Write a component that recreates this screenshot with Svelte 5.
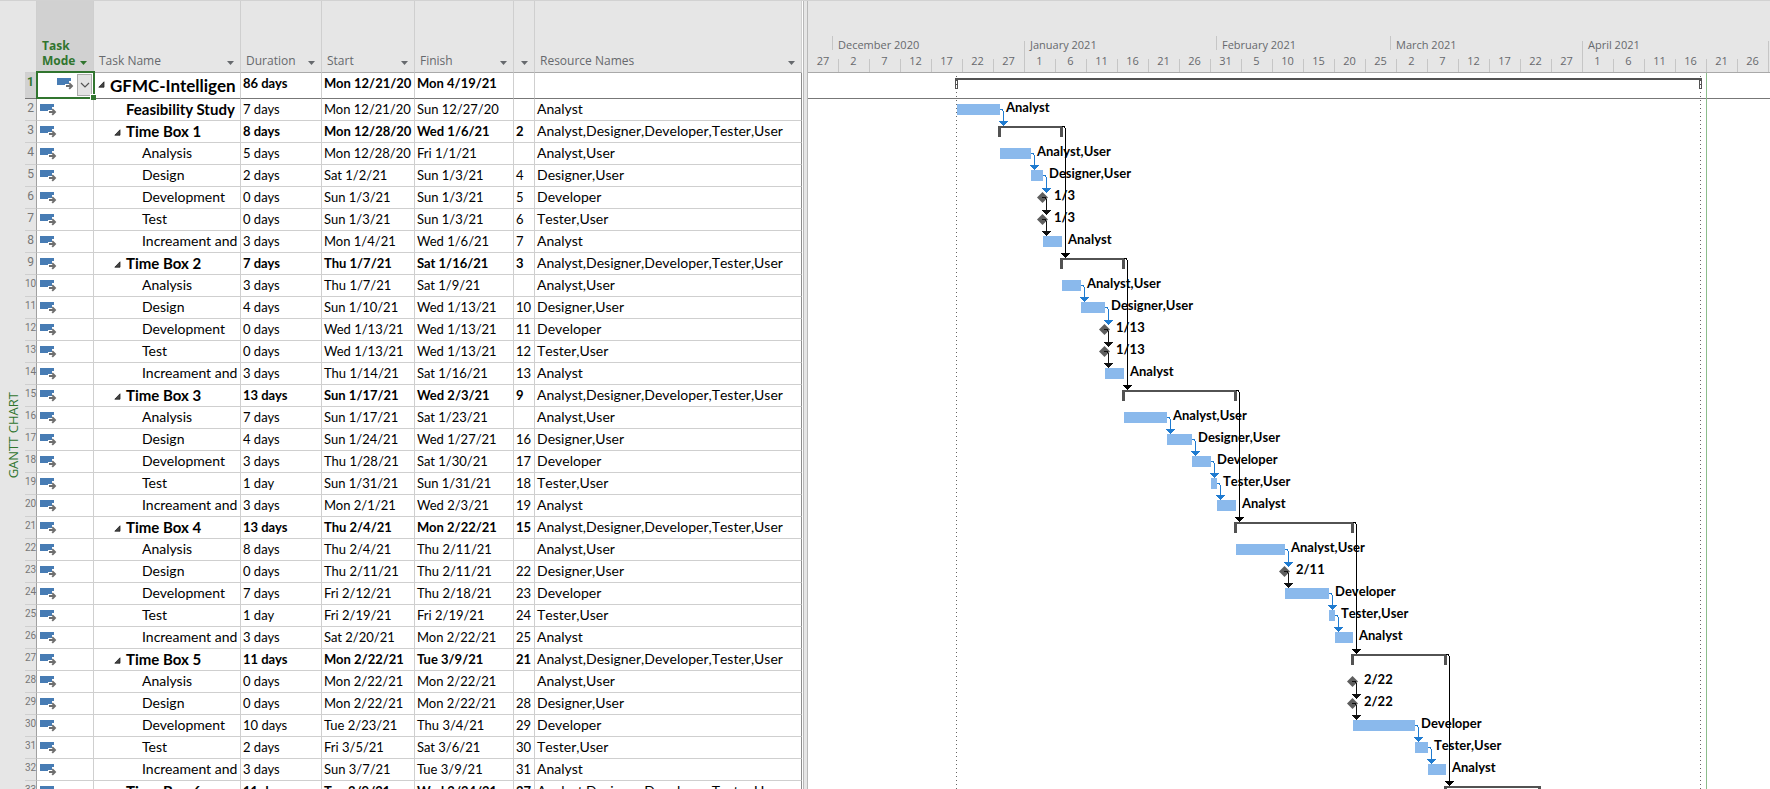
<script>
  const ALL = 'Analyst,Designer,Developer,Tester,User';
  // level, name, duration, start, finish, predecessor, resources
  const tasks = [
    [0, 'GFMC-Intelligen', '86 days', 'Mon 12/21/20', 'Mon 4/19/21', '', ''],
    [1, 'Feasibility Study', '7 days', 'Mon 12/21/20', 'Sun 12/27/20', '', 'Analyst'],
    [1, 'Time Box 1', '8 days', 'Mon 12/28/20', 'Wed 1/6/21', '2', ALL],
    [2, 'Analysis', '5 days', 'Mon 12/28/20', 'Fri 1/1/21', '', 'Analyst,User'],
    [2, 'Design', '2 days', 'Sat 1/2/21', 'Sun 1/3/21', '4', 'Designer,User'],
    [2, 'Development', '0 days', 'Sun 1/3/21', 'Sun 1/3/21', '5', 'Developer'],
    [2, 'Test', '0 days', 'Sun 1/3/21', 'Sun 1/3/21', '6', 'Tester,User'],
    [2, 'Increament and', '3 days', 'Mon 1/4/21', 'Wed 1/6/21', '7', 'Analyst'],
    [1, 'Time Box 2', '7 days', 'Thu 1/7/21', 'Sat 1/16/21', '3', ALL],
    [2, 'Analysis', '3 days', 'Thu 1/7/21', 'Sat 1/9/21', '', 'Analyst,User'],
    [2, 'Design', '4 days', 'Sun 1/10/21', 'Wed 1/13/21', '10', 'Designer,User'],
    [2, 'Development', '0 days', 'Wed 1/13/21', 'Wed 1/13/21', '11', 'Developer'],
    [2, 'Test', '0 days', 'Wed 1/13/21', 'Wed 1/13/21', '12', 'Tester,User'],
    [2, 'Increament and', '3 days', 'Thu 1/14/21', 'Sat 1/16/21', '13', 'Analyst'],
    [1, 'Time Box 3', '13 days', 'Sun 1/17/21', 'Wed 2/3/21', '9', ALL],
    [2, 'Analysis', '7 days', 'Sun 1/17/21', 'Sat 1/23/21', '', 'Analyst,User'],
    [2, 'Design', '4 days', 'Sun 1/24/21', 'Wed 1/27/21', '16', 'Designer,User'],
    [2, 'Development', '3 days', 'Thu 1/28/21', 'Sat 1/30/21', '17', 'Developer'],
    [2, 'Test', '1 day', 'Sun 1/31/21', 'Sun 1/31/21', '18', 'Tester,User'],
    [2, 'Increament and', '3 days', 'Mon 2/1/21', 'Wed 2/3/21', '19', 'Analyst'],
    [1, 'Time Box 4', '13 days', 'Thu 2/4/21', 'Mon 2/22/21', '15', ALL],
    [2, 'Analysis', '8 days', 'Thu 2/4/21', 'Thu 2/11/21', '', 'Analyst,User'],
    [2, 'Design', '0 days', 'Thu 2/11/21', 'Thu 2/11/21', '22', 'Designer,User'],
    [2, 'Development', '7 days', 'Fri 2/12/21', 'Thu 2/18/21', '23', 'Developer'],
    [2, 'Test', '1 day', 'Fri 2/19/21', 'Fri 2/19/21', '24', 'Tester,User'],
    [2, 'Increament and', '3 days', 'Sat 2/20/21', 'Mon 2/22/21', '25', 'Analyst'],
    [1, 'Time Box 5', '11 days', 'Mon 2/22/21', 'Tue 3/9/21', '21', ALL],
    [2, 'Analysis', '0 days', 'Mon 2/22/21', 'Mon 2/22/21', '', 'Analyst,User'],
    [2, 'Design', '0 days', 'Mon 2/22/21', 'Mon 2/22/21', '28', 'Designer,User'],
    [2, 'Development', '10 days', 'Tue 2/23/21', 'Thu 3/4/21', '29', 'Developer'],
    [2, 'Test', '2 days', 'Fri 3/5/21', 'Sat 3/6/21', '30', 'Tester,User'],
    [2, 'Increament and', '3 days', 'Sun 3/7/21', 'Tue 3/9/21', '31', 'Analyst'],
    [1, 'Time Box 6', '11 days', 'Tue 3/9/21', 'Wed 3/24/21', '27', ALL]
  ].map(([level, name, duration, start, finish, pred, res], i) => ({
    id: i + 1, level, name, duration, start, finish, pred, res,
    summary: level === 0 || name.startsWith('Time Box')
  }));

  const columns = ['Task Name', 'Duration', 'Start', 'Finish', '', 'Resource Names'];

  // Month bands: label, width, whether the divider meets a day tick
  const months = [
    ['December 2020', 192, false], ['January 2021', 192, true], ['February 2021', 174, false],
    ['March 2021', 192, false], ['April 2021', 186, true], ['', 60, true]
  ];
  const days = [27, 2, 7, 12, 17, 22, 27, 1, 6, 11, 16, 21, 26, 31, 5, 10, 15, 20, 25, 2, 7, 12, 17, 22, 27, 1, 6, 11, 16, 21, 26];

  // Chart coordinates start at the top left corner of the chart body
  const top = (n) => 26 + 22 * (n - 2);

  // row, start, end, label
  const bars = [
    [2, 149, 192, 'Analyst'], [4, 192, 223, 'Analyst,User'], [5, 223, 235, 'Designer,User'], [8, 235, 254, 'Analyst'],
    [10, 254, 273, 'Analyst,User'], [11, 273, 297, 'Designer,User'], [14, 297, 316, 'Analyst'],
    [16, 316, 359, 'Analyst,User'], [17, 359, 384, 'Designer,User'], [18, 384, 403, 'Developer'],
    [19, 403, 409, 'Tester,User'], [20, 409, 428, 'Analyst'],
    [22, 428, 477, 'Analyst,User'], [24, 477, 521, 'Developer'], [25, 521, 527, 'Tester,User'], [26, 527, 545, 'Analyst'],
    [30, 545, 607, 'Developer'], [31, 607, 620, 'Tester,User'], [32, 620, 638, 'Analyst']
  ];
  const milestones = [[6, 234, '1/3'], [7, 234, '1/3'], [12, 296, '1/13'], [13, 296, '1/13'], [23, 476, '2/11'], [28, 544, '2/22'], [29, 544, '2/22']];
  const summaries = [[3, 190, 255], [9, 252, 317], [15, 314, 429], [21, 426, 546], [27, 543, 639], [33, 636, 733]];

  const isMilestone = (n) => milestones.some((m) => m[0] === n);
  const tip = (n) => top(n) + (isMilestone(n) ? 6 : 5);
  const links = [
    ...bars.filter(([n]) => ![8, 14, 20, 26, 32].includes(n)).map(([n, , end]) => ({
      color: '#1f7bd0', x: end, y: top(n) + 10, tx: end + 3, ty: tip(n + 1)
    })),
    ...milestones.map(([n, x]) => ({ color: '#111', x: x, y: top(n) + 10, tx: x + 4, ty: tip(n + 1) })),
    ...summaries.slice(0, 5).map(([n, , end]) => ({ color: '#000', x: end - 1, y: top(n) + 5, tx: end + 2, ty: tip(n + 6) }))
  ];
</script>

{#snippet modeIcon()}
  <svg class="mode" width="17" height="12" viewBox="0 0 17 12" aria-hidden="true">
    <rect width="14" height="7" fill="#477cb4" />
    <path d="M8 6h4V3h2l3 4v2l-4 3H8z" fill="#fff" />
    <path d="M9 8h6M12.200 5.200L15 8l-2.800 2.800" fill="none" stroke="#6e6e6e" stroke-width="1.900" />
  </svg>
{/snippet}

<main>
  <aside><span>GANTT CHART</span></aside>

  <section class="sheet">
    <table>
      <colgroup>
        <col class="c-id" /><col class="c-mode" /><col class="c-name" /><col class="c-dur" />
        <col class="c-start" /><col class="c-fin" /><col class="c-pred" /><col />
      </colgroup>
      <thead>
        <tr>
          <td class="corner"></td>
          <th class="active">
            <button><span>Task<br />Mode</span><i></i></button>
          </th>
          {#each columns as c}
            <th><button aria-label={c || 'Predecessors'}><span>{c}</span><i></i></button></th>
          {/each}
        </tr>
      </thead>
      <tbody>
        {#each tasks as t}
          <tr class:first={t.id === 1} class:summary={t.summary}>
            <th scope="row" class:wide={t.id > 9}>{t.id}</th>
            {#if t.id === 1}
              <td class="selected">
                <div class="pick">
                  {@render modeIcon()}
                  <button aria-label="Task mode">
                    <svg width="10" height="6" viewBox="0 0 10 6"><path d="M1 1l4 4 4-4" fill="none" stroke="#555" stroke-width="1.2" /></svg>
                  </button>
                </div>
              </td>
            {:else}
              <td>{@render modeIcon()}</td>
            {/if}
            <td class="name l{t.level}">
              <div>
                {#if t.summary}
                  <svg class="fold" width="7" height="7" viewBox="0 0 7 7" aria-hidden="true"><path d="M6 .8v5.4H.8z" fill="#444" stroke="#222" stroke-width=".8" /></svg>
                {/if}
                <span class:strong={t.level < 2}>{t.name}</span>
              </div>
            </td>
            <td>{t.duration}</td>
            <td>{t.start}</td>
            <td>{t.finish}</td>
            <td>{t.pred}</td>
            <td class="res">{t.res}</td>
          </tr>
        {/each}
      </tbody>
    </table>
  </section>

  <div class="splitter"></div>

  <section class="chart">
    <header>
      <div class="months">
        {#each months as [label, width, long]}
          <span class:long style="width: {width}px">{label}</span>
        {/each}
      </div>
      <div class="days">
        {#each days as d}<span>{d}</span>{/each}
      </div>
    </header>
    <svg class="plot" width="100%" height="740" shape-rendering="crispEdges">
      <rect x="0" y="25" width="100%" height="1" fill="#777" />
      <rect x="898" y="0" width="1" height="100%" fill="#8cbd8c" />
      <g stroke="#666" stroke-dasharray="1 3">
        <path d="M148.5 3V740M892.5 3V740" />
      </g>
      <g fill="#525252">
        <rect x="149" y="5" width="743" height="2" />
        <path d="M147 5h3v11h-3zM891 5h3v11h-3z" />
        {#each summaries as [n, a, b]}
          <path d="M{a} {top(n) + 5}H{b}v11h-3v-9H{a + 3}v9h-3z" />
        {/each}
      </g>
      <path d="M148.5 8v7M892.5 8v7" stroke="#fff" stroke-dasharray="3 1" />
      {#each bars as [n, a, b, label]}
        <rect x={a} y={top(n) + 5} width={b - a} height="11" fill="#8ab9ec" />
        <text x={b + 6} y={top(n) + 13}>{label}</text>
      {/each}
      {#each milestones as [n, x, label]}
        <path d="M{x + .5} {top(n) + 5}l5.500 5.500-5.500 5.500-5.500-5.500z" fill="#5e5e5e" shape-rendering="auto" />
        <text x={x + 12} y={top(n) + 13}>{label}</text>
      {/each}
      {#each links as l}
        <path d="M{l.x} {l.y + .5}H{l.tx - 1}l1.500 2V{l.ty - 4}" fill="none" stroke={l.color} />
        <path d="M{l.tx - 4} {l.ty - 5}h9l-4.500 5z" fill={l.color} />
      {/each}
    </svg>
  </section>
</main>

<style>
  :global(body) { margin: 0; }
  main {
    display: grid;
    grid-template-columns: 25px 778px 5px minmax(0, 1fr);
    height: 100vh;
    overflow: hidden;
    box-sizing: border-box;
    border-top: 1px solid #d2d2d2;
    background: #fff;
    color: #000;
    font-family: Lato, Carlito, sans-serif;
    font-size: 13px;
  }
  aside {
    display: flex;
    align-items: center;
    justify-content: center;
    padding-top: 80px;
    background: #e6e6e6;
  }
  aside span {
    writing-mode: vertical-rl;
    transform: rotate(180deg);
    color: #31752f;
    font-family: "Open Sans", sans-serif;
    font-size: 13px;
    font-weight: 500;
    line-height: 16px;
  }
  table {
    width: 777px;
    table-layout: fixed;
    border-collapse: separate;
    border-spacing: 0;
  }
  .sheet { min-height: 0; }
  .c-id { width: 12px; }
  .c-mode { width: 57px; }
  .c-name { width: 147px; }
  .c-dur { width: 81px; }
  .c-start { width: 93px; }
  .c-fin { width: 99px; }
  .c-pred { width: 21px; }
  th, td {
    box-sizing: border-box;
    padding: 0;
    border-right: 1px solid #cfcfcf;
    border-bottom: 1px solid #cfcfcf;
    text-align: left;
    font-weight: 400;
    white-space: nowrap;
  }
  thead th, thead td {
    height: 72px;
    background: #e6e6e6;
    border-bottom-color: #a9a9a9;
    vertical-align: bottom;
  }
  thead th.active { background: #d1d1d1; }
  thead .corner { border-bottom-color: #cfcfcf; }
  button { font: inherit; color: inherit; border: 0; background: none; padding: 0; }
  thead button {
    display: flex;
    align-items: flex-end;
    justify-content: space-between;
    width: 100%;
    padding: 0 6px 4px 5px;
    color: #66696d;
    font-family: "Open Sans", sans-serif;
    font-size: 12px;
    line-height: 15px;
    text-align: left;
  }
  thead i {
    width: 7px;
    height: 4px;
    margin-bottom: 3px;
    background: currentColor;
    clip-path: polygon(0 0, 100% 0, 50% 100%);
  }
  .active button { color: #31752f; font-weight: 700; }
  tbody td { height: 22px; padding-left: 2px; line-height: 20px; vertical-align: top; }
  tbody th {
    background: #e6e6e6;
    border-right-color: #a0a0a0;
    color: #777;
    font-family: Roboto, sans-serif;
    font-size: 12px;
    line-height: 18px;
    text-align: center;
    vertical-align: top;
  }
  tbody th.wide { font-size: 10px; }
  .first td, .first th { height: 26px; border-bottom-color: #777; }
  .first th { background: #d1d1d1; color: #31752f; font-weight: 700; }
  .summary td { font-weight: 700; }
  tbody td.res {
    border-right-color: #8c8c8c;
    font-size: 14px;
    font-weight: 400;
    font-kerning: none;
  }
  .mode { display: block; margin: 5px 0 0 1px; }
  .selected { position: relative; }
  .pick {
    position: absolute;
    inset: -2px -2px -1px -1px;
    display: flex;
    justify-content: flex-end;
    gap: 3px;
    border: 2px solid #31752f;
    padding: 1px;
    background: #fff;
  }
  .pick::after {
    content: "";
    position: absolute;
    right: -3px;
    bottom: -3px;
    width: 5px;
    height: 5px;
    border: 1px solid #fff;
    border-right: 0;
    border-bottom: 0;
    background: #31752f;
  }
  .pick button {
    display: flex;
    align-items: center;
    justify-content: center;
    box-sizing: border-box;
    width: 15px;
    border: 1px solid #ababab;
    background: #e3e3e3;
  }
  .pick .mode { margin-top: 4px; }
  .name { font-size: 14px; }
  .name div { display: flex; gap: 5px; }
  .fold { flex: none; margin-top: 8px; }
  .l0 { padding-left: 4px; }
  .l1 { padding-left: 20px; }
  tr:not(.summary) .l1 { padding-left: 32px; }
  .l2 { padding-left: 48px; }
  .strong { font-size: 15px; font-weight: 700; line-height: 21px; }
  .l0 .strong { font-size: 17px; line-height: 25px; }
  .l1 div { height: 21px; }
  .splitter {
    box-sizing: border-box;
    border: solid #b8b8b8;
    border-width: 0 1px;
    background: #e6e6e6;
  }
  .chart { overflow: hidden; min-height: 0; }
  header {
    box-sizing: border-box;
    height: 72px;
    padding-top: 35px;
    border-bottom: 1px solid #a9a9a9;
    background: #e6e6e6;
    color: #66696d;
    font-family: "Open Sans", sans-serif;
    font-size: 11px;
    overflow: hidden;
  }
  .months, .days { display: flex; }
  .months { padding-left: 24px; }
  .months span { position: relative; flex: none; box-sizing: border-box; padding-left: 6px; height: 18px; line-height: 18px; }
  .months span::before { content: ""; position: absolute; left: 0; top: 0; width: 1px; height: 14px; background: #c6c6c6; }
  .months span.long::before { top: 5px; height: 31px; }
  .days span { position: relative; flex: none; width: 31px; height: 18px; line-height: 14px; text-align: center; }
  .days span:first-child { width: 30px; }
  .days span + span::before { content: ""; position: absolute; left: 0; top: 5px; width: 1px; height: 13px; background: #c6c6c6; }
  .plot { display: block; }
  text { font-weight: 700; font-size: 13px; font-kerning: none; }
</style>
